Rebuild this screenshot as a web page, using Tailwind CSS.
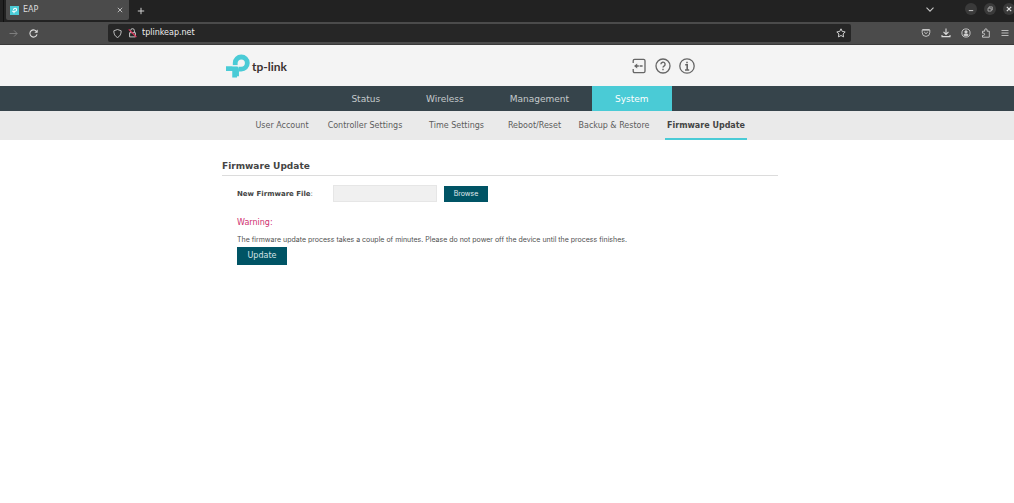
<!DOCTYPE html>
<html lang="en">
<head>
<meta charset="utf-8">
<meta name="viewport" content="width=device-width, initial-scale=1">
<title>EAP</title>
<script src="https://cdn.jsdelivr.net/npm/@tailwindcss/browser@4"></script>
</head>
<body class="min-h-screen bg-white font-['DejaVu_Sans',sans-serif] text-[8px] leading-3 text-[#4f4f4f]">

<!-- Browser window -->
<div class="text-[#dcdcdc]">
  <div class="flex h-[22px] items-center bg-[#222222]">
    <div class="ml-[3px] h-full w-px bg-[#111111]"></div>
    <div class="ml-[2px] flex h-[20px] w-[123px] items-center self-start rounded-b-xs bg-[#4b4b4b] pl-1 pr-[5px]">
      <svg class="size-[9px]" viewBox="0 0 9 9"><path fill="#4acbd6" d="M0 0h9v9H0z"/><path d="M3.6 4V3.6A1.5 1.5 0 1 1 5.1 5.2H2.1M4 5v2.3" fill="none" stroke="#fff" stroke-width="1.1"/></svg>
      <span class="ml-[4px] grow">EAP</span>
      <button aria-label="Close tab" class="p-px"><svg class="size-[6px]" viewBox="0 0 6 6" stroke="#c8c8c8" stroke-width=".9"><path d="M.8.8l4.4 4.4M5.2.8L.8 5.2"/></svg></button>
    </div>
    <button aria-label="New tab" class="ml-[8px]"><svg class="size-[8px]" viewBox="0 0 8 8" stroke="#d0d0d0"><path d="M4 .8v6.4M.8 4h6.4"/></svg></button>
    <div class="grow"></div>
    <button aria-label="List tabs" class="mr-[31px] self-start pt-[7px]"><svg class="h-[5px] w-[8px]" viewBox="0 0 8 5" fill="none" stroke="#c8c8c8" stroke-width="1.1"><path d="M.5.6L4 4.1 7.5.6"/></svg></button>
    <div class="-mr-px flex gap-[7px] self-start pt-[3px]">
      <button aria-label="Minimize" class="size-[12px] rounded-full bg-[#3a3a3a]"><svg viewBox="0 0 12 12" stroke="#c8c8c8"><path d="M3.8 7.6h4.4"/></svg></button>
      <button aria-label="Restore" class="size-[12px] rounded-full bg-[#3a3a3a]"><svg viewBox="0 0 12 12" fill="none" stroke="#b4b4b4" stroke-width=".8"><path d="M4 5.2h3.2v2.9H4zM5 5V3.9h3.3V7H7.4"/></svg></button>
      <button aria-label="Close window" class="size-[12px] rounded-full bg-[#3a3a3a]"><svg viewBox="0 0 12 12" stroke="#dcdcdc" stroke-width="1.2"><path d="M3.8 3.8l4.4 4.4M8.2 3.8L3.8 8.2"/></svg></button>
    </div>
  </div>
  <div class="flex h-[23px] items-center border-b border-[#393939] bg-[#4b4b4b]">
    <button aria-label="Forward" disabled class="ml-[9px]"><svg class="size-[9px]" viewBox="0 0 9 9" fill="none" stroke="#858585" stroke-width=".9"><path d="M.5 4.5h7.6M5 1.4l3.1 3.1L5 7.6"/></svg></button>
    <button aria-label="Reload" class="ml-[11px]"><svg class="size-[9px]" viewBox="0 0 9 9" fill="none" stroke="#dcdcdc" stroke-width="1.1"><path d="M7.8 3A3.6 3.6 0 1 0 8 5.4"/><path d="M8.7.4v3.3H5.4z" fill="#dcdcdc" stroke="none"/></svg></button>
    <div class="ml-[70px] mr-[70px] flex h-[18px] grow items-center rounded-xs bg-[#262626] pl-[5px] pr-[5px]">
      <svg class="size-[9px]" viewBox="0 0 9 9" fill="none" stroke="#c8c8c8" stroke-width=".9"><path d="M4.5.5L8.2 1.8C8.2 5 7 7.4 4.5 8.5 2 7.4.8 5 .8 1.8z"/></svg>
      <svg class="ml-[6px] h-[10px] w-[9px]" viewBox="0 0 9 10" fill="none" stroke="#c8c8c8" stroke-width="1"><path d="M1.6 4.7h5.8v4.2H1.6zM2.6 4.5V2.6a1.9 1.9 0 0 1 3.8 0v1.9"/><path stroke="#e0325a" stroke-width="1.1" d="M.8 1.4L8.4 9"/></svg>
      <input aria-label="Address" value="tplinkeap.net" class="ml-[5px] min-w-0 grow bg-transparent p-0 text-[#ededed] outline-none">
      <button aria-label="Bookmark page"><svg class="size-[10px]" viewBox="0 0 10 10" fill="none" stroke="#d0d0d0" stroke-width="1" stroke-linejoin="round"><path d="M5 .8l1.3 2.7 2.9.4-2.1 2.1.5 2.9L5 7.5 2.4 8.9l.5-2.9L.8 3.9l2.9-.4z"/></svg></button>
    </div>
    <div class="flex items-center gap-[10px] pr-[5px]">
      <button aria-label="Save to Pocket"><svg class="size-[10px]" viewBox="0 0 10 10" fill="none" stroke="#d0d0d0" stroke-width=".9"><path d="M2 1.5h6q.8 0 .8.8v2.3a3.8 3.8 0 0 1-7.6 0V2.3q0-.8.8-.8zM3.2 4L5 5.7 6.8 4M1.3 2.2h7.4"/></svg></button>
      <button aria-label="Downloads"><svg class="size-[10px]" viewBox="0 0 10 10" fill="none" stroke="#dcdcdc" stroke-width="1.1"><path d="M5 .5v5.7M2.5 3.9L5 6.4l2.5-2.5M1 7v1.6h8V7"/></svg></button>
      <button aria-label="Account"><svg class="size-[10px]" viewBox="0 0 10 10" fill="none" stroke="#d0d0d0" stroke-width=".9"><circle cx="5" cy="5" r="4.1"/><circle cx="5" cy="3.9" r="1.2" fill="#d0d0d0"/><path fill="#d0d0d0" d="M2.9 7.2q0-1.2 1.1-1.2h2q1.1 0 1.1 1.2Q5 8.4 2.9 7.2z"/></svg></button>
      <button aria-label="Extensions"><svg class="size-[10px]" viewBox="0 0 10 10" fill="none" stroke="#d0d0d0" stroke-width=".9"><path d="M1.5 3.2h2.2V2a1.2 1.2 0 0 1 2.4 0v1.2h2.2v6H1.5V7.4h1a1.1 1.1 0 0 0 0-2.2h-1z"/></svg></button>
      <button aria-label="Menu"><svg class="h-[10px] w-[8px]" viewBox="0 0 8 10" stroke="#c8c8c8" stroke-width=".9"><path d="M.5 2.5h7M.5 5h7M.5 7.5h7"/></svg></button>
    </div>
  </div>
</div>

<!-- EAP admin page -->
<header class="bg-[#f4f4f4] pr-[14px]">
  <div class="mx-auto flex h-[41px] max-w-[556px] items-center pl-[4px] pr-[83px] pt-px">
    <a href="#" aria-label="tp-link" class="flex items-center">
      <svg class="size-[24px]" viewBox="0 0 25 25" fill="none" stroke="#4acbd6" stroke-width="5"><path d="M9.6 11.6V9.4a6.3 6.3 0 1 1 6.3 6.3h-2.4"/><path d="M0 15.3h11v7.9" stroke-linejoin="round"/><path d="M9 15v9.5"/><path stroke="#f4f4f4" stroke-width="1" d="M6.5 12.3h6"/></svg>
      <span class="ml-[2px] pt-[2px] font-['Lato',sans-serif] text-[12px] font-bold leading-4 text-[#3c3230]">tp-link</span>
    </a>
    <div class="ml-auto flex items-center gap-[8px]">
      <button aria-label="Log out"><svg class="size-4" viewBox="0 0 16 16" fill="none" stroke="#666" stroke-width="1.3"><path d="M2.2 5V2.8q0-1.4 1.4-1.4h9q1.4 0 1.4 1.4v10.4q0 1.4-1.4 1.4h-9q-1.4 0-1.4-1.4V11"/><path stroke-width="1.7" d="M5 8h2.8M8.6 8h3"/><path fill="#666" stroke="none" d="M3 8l3.2-2.6v5.2z"/></svg></button>
      <button aria-label="Help"><svg class="size-4" viewBox="0 0 16 16" fill="none" stroke="#666" stroke-width="1.3"><circle cx="8" cy="8" r="7"/><path stroke-width="1.4" d="M5.9 6.3A2.1 2.1 0 1 1 9 8.1q-1 .6-1 1.5M8 10.8v1.5"/></svg></button>
      <button aria-label="About"><svg class="size-4" viewBox="0 0 16 16" fill="none" stroke="#666" stroke-width="1.3"><circle cx="8" cy="8" r="7.2"/><path stroke-width="1.6" d="M6.2 6.7h2v5M6 12h4.2M8 3.7v1.6"/></svg></button>
    </div>
  </div>
</header>

<nav aria-label="Main" class="flex h-[25px] justify-center bg-[#36444b] pr-[14px] text-[9px] text-[#c5cacc]">
  <a href="#" class="flex items-center px-[23px]">Status</a>
  <a href="#" class="flex items-center px-[23px]">Wireless</a>
  <a href="#" class="flex items-center px-[23px]">Management</a>
  <a href="#" aria-current="page" class="flex items-center bg-[#4acbd6] px-[23px] text-white">System</a>
</nav>

<nav aria-label="System" class="flex h-[29px] justify-center gap-[12px] bg-[#eaeaea] pr-[14px] text-center whitespace-nowrap text-[#5c5c5c]">
  <a href="#" class="flex w-[58px] items-center justify-center pt-px">User Account</a>
  <a href="#" class="flex w-[84px] items-center justify-center pt-px">Controller Settings</a>
  <a href="#" class="flex w-[75px] items-center justify-center pt-px">Time Settings</a>
  <a href="#" class="flex w-[57px] items-center justify-center pt-px">Reboot/Reset</a>
  <a href="#" class="flex w-[78px] items-center justify-center pt-px">Backup &amp; Restore</a>
  <a href="#" aria-current="page" class="flex w-[82px] items-center justify-center border-b-2 border-[#4acbd6] pt-[3px] font-bold text-[#444]">Firmware Update</a>
</nav>

<main class="pr-[14px] pt-[19px]">
  <div class="mx-auto max-w-[556px]">
    <h1 class="border-b border-[#dcdcdc] pb-[2px] text-[9px] font-bold leading-[14px] text-[#444]">Firmware Update</h1>
    <form class="pl-[15px] pt-[9px]">
      <div class="flex items-center">
        <label for="file" class="w-[96px] text-[7px]"><b class="text-[#444]">New Firmware File</b>:</label>
        <input id="file" readonly class="h-[17px] w-[104px] border border-[#e6e6e6] bg-[#f0f0f0] px-1">
        <button type="button" class="ml-[7px] h-4 w-[44px] bg-[#005465] font-['Inter',sans-serif] text-[7px] text-[#e0ebed]">Browse</button>
      </div>
      <p class="mt-[15px] text-[#cf3070]">Warning:</p>
      <p class="mt-[5px] font-['Inter',sans-serif] text-[7px]">The firmware update process takes a couple of minutes. Please do not power off the device until the process finishes.</p>
      <button type="button" class="mt-px h-[18px] w-[50px] bg-[#005465] text-[#d5e3e6]">Update</button>
    </form>
  </div>
</main>
</body>
</html>
